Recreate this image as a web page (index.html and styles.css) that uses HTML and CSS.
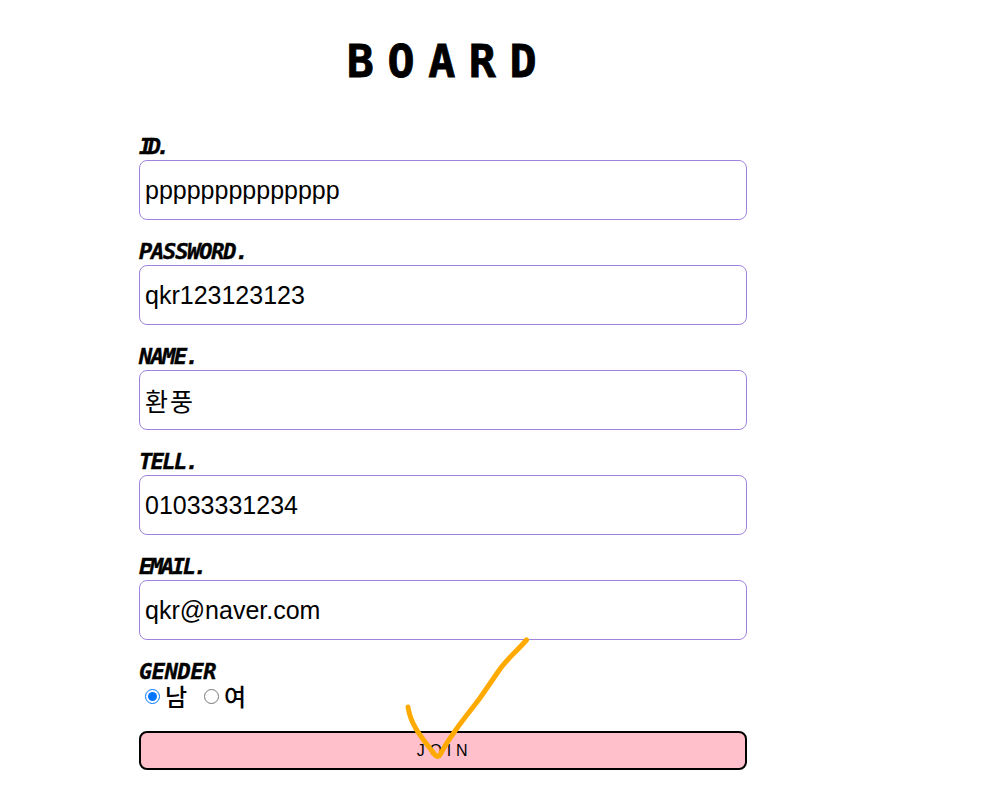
FILE: index.html
```
<!DOCTYPE html>
<html lang="ko">
<head>
    <meta charset="UTF-8">
    <title>BOARD</title>
    <link rel="stylesheet" href="styles.css">
</head>
<body>
    <form class="join">
        <h1 class="title">BOARD</h1>

        <div class="row">
            <label class="label id" for="id">ID.</label>
            <input type="text" id="id" class="input" value="pppppppppppppp">
        </div>
        <div class="row">
            <label class="label password" for="pw">PASSWORD.</label>
            <input type="text" id="pw" class="input" value="qkr123123123">
        </div>
        <div class="row">
            <label class="label name" for="name">NAME.</label>
            <input type="text" id="name" class="input korean" value="환풍">
        </div>
        <div class="row">
            <label class="label tell" for="tell">TELL.</label>
            <input type="text" id="tell" class="input" value="01033331234">
        </div>
        <div class="row">
            <label class="label email" for="email">EMAIL.</label>
            <input type="text" id="email" class="input" value="qkr@naver.com">
        </div>
        <div class="row">
            <span class="label gender">GENDER</span>
            <div class="radios">
                <input type="radio" name="gender" id="m" checked><label for="m">남</label>
                <input type="radio" name="gender" id="f"><label for="f">여</label>
            </div>
        </div>

        <div class="footer">
            <button type="button" class="button">JOIN</button>
            <!-- hand drawn check over the button -->
            <svg class="check" width="130" height="128" viewBox="0 0 130 128">
                <path d="M8 72 C11 92 24 105 35 120 C37 122 39 122 40 120 C50 100 65 83 80 63 L100 34 C108 23 116 17 126.500 5"/>
            </svg>
        </div>
    </form>
</body>
</html>
```

FILE: styles.css
```
body {
    margin: 0;
    background-color: white;
    color: black;
    font-family: "DejaVu Sans Mono", "Noto Sans CJK KR", monospace;
}

.join {
    width: 608px;
    margin-left: 139px;
}

.title {
    margin: 0;
    padding: 32px 0 43px;
    height: 60px;
    line-height: 60px;
    font-size: 45px;
    font-weight: bold;
    letter-spacing: 13.6px;
    text-align: center;
    text-indent: 11px;
    -webkit-text-stroke: 0.8px black;
}

.row {
    margin-bottom: 20px;
}

.label {
    display: block;
    height: 25px;
    line-height: 23px;
    font-size: 22px;
    font-weight: bold;
    font-style: italic;
    white-space: nowrap;
    -webkit-text-stroke: 0.4px black;
}

.id {
    letter-spacing: -4.5px;
}

.password {
    letter-spacing: -1.2px;
}

.name {
    letter-spacing: -1.6px;
}

.tell {
    letter-spacing: -1.6px;
}

.email {
    letter-spacing: -2.3px;
}

.gender {
    letter-spacing: -0.4px;
}

.input {
    display: block;
    width: 100%;
    height: 60px;
    padding: 1px 5px;
    box-sizing: border-box;
    border: 1px solid #a084dc;
    border-radius: 8px;
    background-color: white;
    color: black;
    font-family: "Liberation Sans", "Noto Sans CJK KR", sans-serif;
    font-size: 25px;
}

.korean {
    letter-spacing: 2px;
}

.radios {
    display: flex;
    align-items: center;
    height: 26px;
    font-family: "Noto Sans CJK KR", sans-serif;
    font-size: 24px;
    font-weight: 500;
    line-height: 20px;
}

.radios input {
    width: 15px;
    height: 15px;
    margin: 0 5px 3px 6px;
}

.radios label {
    width: 33px;
    height: 24px;
}

.footer {
    position: relative;
}

.button {
    display: block;
    width: 100%;
    height: 39px;
    padding: 0 0 0 3px;
    border: 2px solid black;
    border-radius: 8px;
    background-color: pink;
    color: black;
    font-family: "Liberation Sans", sans-serif;
    font-size: 16px;
    letter-spacing: 4.8px;
}

.check {
    position: absolute;
    left: 261px;
    top: -96px;
}

.check path {
    fill: none;
    stroke: #ffaa00;
    stroke-width: 5;
    stroke-linecap: round;
    stroke-linejoin: round;
}
```
